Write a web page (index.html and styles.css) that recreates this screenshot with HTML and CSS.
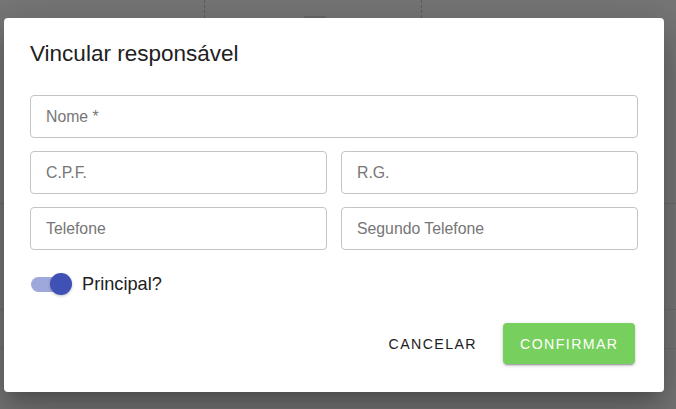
FILE: index.html
```html
<!DOCTYPE html>
<html lang="pt">
<head>
<meta charset="utf-8">
<link rel="stylesheet" href="styles.css">
</head>
<body>
<div class="backdrop">
  <div class="bg-line v1"></div>
  <div class="bg-line v2"></div>
  <div class="bg-tab"></div>
  <div class="bg-line h1"></div>
  <div class="bg-line h2"></div>
  <div class="bg-line h3"></div>

  <div class="dialog" role="dialog">
    <h2 class="title">Vincular responsável</h2>
    <div class="form">
      <div class="field full"><span class="ph">Nome *</span></div>
      <div class="row">
        <div class="field"><span class="ph">C.P.F.</span></div>
        <div class="field"><span class="ph">R.G.</span></div>
      </div>
      <div class="row">
        <div class="field"><span class="ph">Telefone</span></div>
        <div class="field"><span class="ph">Segundo Telefone</span></div>
      </div>
    </div>
    <label class="switch-row">
      <span class="switch"><span class="track"></span><span class="thumb"></span></span>
      <span class="switch-label">Principal?</span>
    </label>
    <div class="actions">
      <button class="btn btn-text">Cancelar</button>
      <button class="btn btn-primary">Confirmar</button>
    </div>
  </div>
</div>
</body>
</html>
```
FILE: styles.css
```css
* { box-sizing: border-box; }
html, body { margin: 0; padding: 0; }
body {
  width: 676px;
  height: 409px;
  overflow: hidden;
  font-family: "Liberation Sans", Arial, sans-serif;
}
.backdrop {
  position: relative;
  width: 676px;
  height: 409px;
  background: #767676;
  padding: 18px 12px 0 4px;
}
.bg-line { position: absolute; }
.bg-line.v1 { left: 204px; top: 0; height: 18px; border-left: 1px dashed #5e5e5e; }
.bg-line.v2 { left: 421px; top: 0; height: 18px; border-left: 1px dashed #5e5e5e; }
.bg-tab { position: absolute; left: 304px; top: 16px; width: 22px; height: 2px; background: #686868; }
.bg-line.h1 { left: 0; right: 0; top: 203px; border-top: 1px solid #6a6a6a; }
.bg-line.h2 { left: 0; right: 0; top: 309px; border-top: 1px dashed #6a6a6a; }
.bg-line.h3 { left: 0; right: 0; top: 348px; border-top: 1px dashed #6a6a6a; }

.dialog {
  position: relative;
  width: 660px;
  height: 374px;
  background: #fff;
  border-radius: 4px;
  box-shadow: 0 11px 15px -7px rgba(0,0,0,0.2), 0 24px 38px 3px rgba(0,0,0,0.14), 0 9px 46px 8px rgba(0,0,0,0.12);
  padding: 0 26px 0 26px;
  display: flex;
  flex-direction: column;
}
.title {
  margin: 0;
  padding-top: 22px;
  height: 77px;
  font-size: 22.5px;
  font-weight: 400;
  line-height: 28px;
  color: #212121;
}
.form {
  display: flex;
  flex-direction: column;
  gap: 13px;
}
.row {
  display: grid;
  grid-template-columns: 1fr 1fr;
  gap: 14px;
}
.field {
  height: 43px;
  border: 1px solid #c4c4c4;
  border-radius: 4px;
  display: flex;
  align-items: center;
  padding-left: 15px;
}
.ph {
  font-size: 15.8px;
  color: #767676;
}
.switch-row {
  display: flex;
  align-items: center;
  margin-top: 22px;
  height: 24px;
  gap: 10px;
  padding-left: 1px;
}
.switch {
  position: relative;
  width: 41px;
  height: 24px;
  display: block;
}
.track {
  position: absolute;
  left: 0;
  top: 5px;
  width: 34px;
  height: 15px;
  border-radius: 8px;
  background: #9fa8da;
}
.thumb {
  position: absolute;
  left: 19px;
  top: 1px;
  width: 22px;
  height: 22px;
  border-radius: 50%;
  background: #3f51b5;
  box-shadow: 0 1px 3px rgba(0,0,0,0.25);
}
.switch-label {
  font-size: 18.2px;
  color: #212121;
}
.actions {
  display: flex;
  justify-content: flex-end;
  align-items: center;
  margin-top: 27px;
  gap: 9px;
  padding-right: 3px;
}
.btn {
  font-family: "Liberation Sans", Arial, sans-serif;
  font-size: 14.2px;
  font-weight: 400;
  letter-spacing: 1.4px;
  text-transform: uppercase;
  border: none;
  border-radius: 4px;
  height: 41px;
  cursor: pointer;
}
.btn-text {
  background: transparent;
  color: #212121;
  padding: 0 17px;
}
.btn-primary {
  background: #77cf5d;
  color: #fff;
  padding: 0 17px;
  width: 132px;
  box-shadow: 0 3px 1px -2px rgba(0,0,0,0.2), 0 2px 2px 0 rgba(0,0,0,0.14), 0 1px 5px 0 rgba(0,0,0,0.12);
}
```
